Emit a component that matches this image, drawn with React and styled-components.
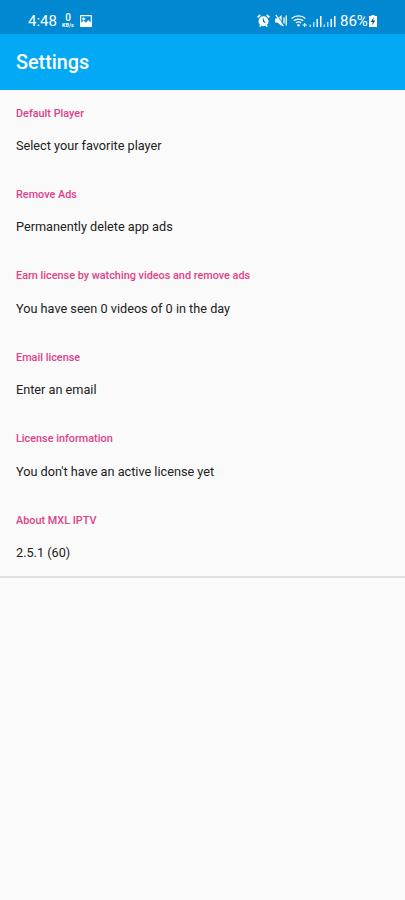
import React from 'react';
import styled, { createGlobalStyle } from 'styled-components';

const GlobalStyle = createGlobalStyle`
  html, body {
    margin: 0;
    padding: 0;
    background: #fafafa;
    font-family: Roboto, "Liberation Sans", sans-serif;
  }
`;

const settings = [
  { title: 'Default Player', value: 'Select your favorite player' },
  { title: 'Remove Ads', value: 'Permanently delete app ads' },
  { title: 'Earn license by watching videos and remove ads', value: 'You have seen 0 videos of 0 in the day' },
  { title: 'Email license', value: 'Enter an email' },
  { title: 'License information', value: "You don't have an active license yet" },
  { title: 'About MXL IPTV', value: '2.5.1 (60)' },
];

function App() {
  return (
    <Page>
      <GlobalStyle />
      <StatusBar>
        <StatusGroup>
          <Clock>4:48</Clock>
          <Speed>
            <b>0</b>
            <span>KB/s</span>
          </Speed>
          <Icon $left={5} width="12" height="12" viewBox="0 0 13 13">
            <path fill="#fff" fillRule="evenodd" d="M1 0h11a1 1 0 0 1 1 1v11a1 1 0 0 1-1 1H1a1 1 0 0 1-1-1V1a1 1 0 0 1 1-1zm.4 1.4v7l2.6-2.4 2.4 2.4 2.6-3 2.6 3v-7z" />
            <path fill="#fff" d="M3.4 2.4h1.2v1.2h1.2v1.2H4.6V6H3.4V4.8H2.2V3.6h1.2z" />
          </Icon>
        </StatusGroup>
        <StatusGroup>
          <Icon width="13" height="13" viewBox="0 0 13 13">
            <circle cx="6.5" cy="7.2" r="5" fill="#fff" />
            <path stroke="#0288d1" strokeWidth="1.3" fill="none" d="M6.5 4.4v3l2 1.2" />
            <path stroke="#fff" strokeWidth="1.8" d="M.7 3.4L3.2.9M12.3 3.4L9.8.9M2.8 12.6l1-1.4M10.2 12.6l-1-1.4" />
          </Icon>
          <Icon $left={5} width="12" height="13" viewBox="0 0 12 13">
            <path fill="#fff" d="M0 4.5h2.4L6.6 1v11L2.4 8.5H0z" />
            <path stroke="#fff" strokeWidth="1.3" d="M.8.8l7.6 11.4M9 3.5v6M11.2 1.5v10" />
            <path stroke="#0288d1" strokeWidth="0.8" d="M1.8.4l7.6 11.4" />
          </Icon>
          <Icon $left={4} width="16" height="13" viewBox="0 0 16 13">
            <path stroke="#fff" strokeWidth="1.2" fill="none" d="M.6 4.5a10.500 10.500 0 0 1 13.800 0M2.700 6.800a7.400 7.400 0 0 1 9.600 0M4.900 9a4.100 4.100 0 0 1 5.200 0" />
            <circle cx="7.5" cy="11.2" r="1.2" fill="#fff" />
            <path stroke="#fff" strokeWidth="1" d="M11.500 11h4.500M13.700 9v4" />
          </Icon>
          <Signal $left={2} />
          <Signal $left={1} />
          <Battery>86%</Battery>
          <Icon $left={2} width="8" height="12" viewBox="0 0 8 12">
            <path fill="#fff" d="M2.500 0h3v1H8v11H0V1h2.500z" />
            <path fill="#01579b" d="M4.800 2L1.800 7h1.900L3 10.600 6.300 5.400H4.200z" />
          </Icon>
        </StatusGroup>
      </StatusBar>
      <Toolbar>Settings</Toolbar>
      <List>
        {settings.map((item) => (
          <Item key={item.title}>
            <Title>{item.title}</Title>
            <Value>{item.value}</Value>
          </Item>
        ))}
      </List>
    </Page>
  );
}

function Signal({ $left }) {
  return (
    <Icon $left={$left} width="13" height="12" viewBox="0 0 13 12">
      <path fill="#fff" opacity="0.7" d="M.5 9.500H2V12H.5zM4 7H5.500v5H4z" />
      <path fill="#fff" d="M7.500 4H9v8H7.500zM11 1h1.500v11H11z" />
    </Icon>
  );
}

const Page = styled.div`
  width: 405px;
  min-height: 900px;
  background: #fafafa;
`;

const StatusBar = styled.div`
  box-sizing: border-box;
  height: 34px;
  padding: 7px 28px 0;
  display: flex;
  align-items: center;
  justify-content: space-between;
  background: #0288d1;
  color: #fff;
`;

const StatusGroup = styled.div`
  display: flex;
  align-items: center;
`;

const Icon = styled.svg`
  flex: none;
  margin-left: ${(props) => props.$left || 0}px;
`;

const Clock = styled.span`
  font-size: 15px;
  width: 28px;
`;

const Speed = styled.span`
  margin-left: 5px;
  width: 14px;
  display: flex;
  flex-direction: column;
  align-items: center;

  b {
    font-size: 10px;
    font-weight: 500;
    line-height: 9px;
  }

  span {
    font-size: 5.5px;
    font-weight: 700;
    line-height: 6px;
    white-space: nowrap;
  }
`;

const Battery = styled.span`
  font-size: 15px;
  margin-left: 4px;
  width: 27px;
  white-space: nowrap;
`;

const Toolbar = styled.header`
  box-sizing: border-box;
  height: 56px;
  padding: 0 16px;
  display: flex;
  align-items: center;
  background: #03a9f4;
  color: #fff;
  font-size: 19.8px;
  font-weight: 500;
`;

const List = styled.div`
  border-bottom: 2px solid #e0e0e0;
`;

const Item = styled.section`
  box-sizing: border-box;
  height: 81.4px;
  padding: 16.6px 16px 0;

  &:last-child {
    height: 79px;
  }
`;

const Title = styled.div`
  font-size: 10.85px;
  font-weight: 500;
  line-height: 13px;
  color: #e0408a;
`;

const Value = styled.div`
  margin-top: 16.4px;
  font-size: 12.7px;
  line-height: 20px;
  color: #212121;
`;

export default App;
